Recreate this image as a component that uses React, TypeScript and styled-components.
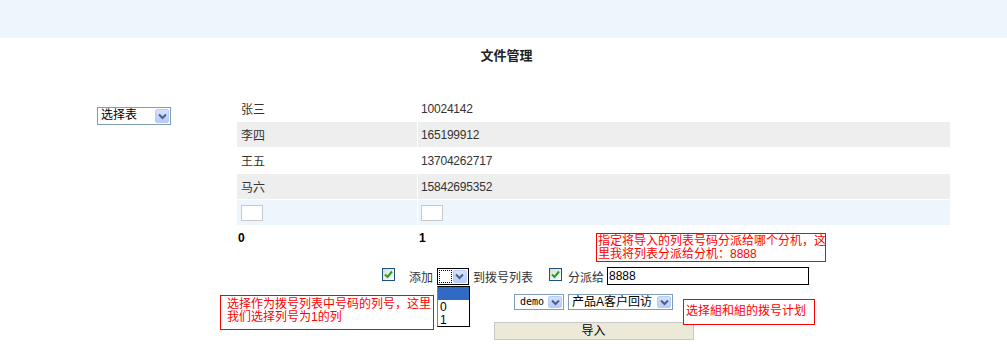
import React, { FC } from 'react'
import styled, { createGlobalStyle } from 'styled-components'

const GlobalStyle = createGlobalStyle`
  body {
    margin: 0;
    background: #fff;
    font-family: "Liberation Sans", "Noto Sans CJK SC", sans-serif;
    font-size: 12px;
    color: #333;
  }
`

type Tone = 'white' | 'gray' | 'blue'

const rows: { name: string; phone: string; tone: Tone }[] = [
  { name: '张三', phone: '10024142', tone: 'white' },
  { name: '李四', phone: '165199912', tone: 'gray' },
  { name: '王五', phone: '13704262717', tone: 'white' },
  { name: '马六', phone: '15842695352', tone: 'gray' },
]

const Chevron: FC = () => (
  <svg width="9" height="7" viewBox="0 0 9 7">
    <path d="M1 1.5 L4.5 5 L8 1.5" fill="none" stroke="#4d6185" strokeWidth="2" />
  </svg>
)

const Check: FC = () => (
  <svg width="11" height="11" viewBox="0 0 11 11">
    <polyline points="2,5.5 4.5,8 9,2.5" fill="none" stroke="#21a121" strokeWidth="2" />
  </svg>
)

const App: FC = () => {
  return (
    <Page>
      <GlobalStyle />
      <TopBand />
      <Title>文件管理</Title>
      <Main>
        <LeftCol>
          <Combo $w={74} $h={18}>
            <ComboText>选择表</ComboText>
            <DropBtn>
              <Chevron />
            </DropBtn>
          </Combo>
        </LeftCol>
        <RightCol>
          <DataTable>
            <tbody>
              {rows.map((r) => (
                <Row key={r.name} $tone={r.tone}>
                  <NameCell>{r.name}</NameCell>
                  <NumCell>{r.phone}</NumCell>
                </Row>
              ))}
              <Row $tone="blue">
                <NameCell>
                  <TinyInput />
                </NameCell>
                <NumCell>
                  <TinyInput />
                </NumCell>
              </Row>
              <IndexRow>
                <IndexCell>0</IndexCell>
                <IndexCell>1</IndexCell>
              </IndexRow>
            </tbody>
          </DataTable>
          <Controls>
            <ControlLine>
              <CheckBox>
                <Check />
              </CheckBox>
              <Label $ml={14}>添加</Label>
              <FocusCombo>
                <FocusBox />
                <DropBtn>
                  <Chevron />
                </DropBtn>
                <DropList>
                  <DropItem $active />
                  <DropItem>0</DropItem>
                  <DropItem>1</DropItem>
                </DropList>
              </FocusCombo>
              <Label $ml={4}>到拨号列表</Label>
              <CheckBox $ml={16}>
                <Check />
              </CheckBox>
              <Label $ml={6}>分派给</Label>
              <ExtInput value="8888" readOnly />
            </ControlLine>
            <SelectLine>
              <Combo $w={50} $h={16}>
                <MonoText>demo</MonoText>
                <DropBtn>
                  <Chevron />
                </DropBtn>
              </Combo>
              <Combo $w={105} $h={16}>
                <ComboText>产品A客户回访</ComboText>
                <DropBtn>
                  <Chevron />
                </DropBtn>
              </Combo>
            </SelectLine>
            <ImportButton>导入</ImportButton>
          </Controls>
        </RightCol>
      </Main>

      <Note $x={596} $y={233} $w={230} $h={29} $pad="1px 0 0 1px">
        指定将导入的列表号码分派给哪个分机，这
        <br />
        里我将列表分派给分机：8888
      </Note>
      <Note $x={220} $y={295} $w={214} $h={35} $pad="2px 0 0 6px">
        选择作为拨号列表中号码的列号，这里
        <br />
        我们选择列号为1的列
      </Note>
      <Note $x={683} $y={299} $w={132} $h={26} $pad="5px 0 0 2px">
        选择組和組的拨号计划
      </Note>
    </Page>
  )
}

export default App

const Page = styled.div`
  position: relative;
  width: 1007px;
  height: 358px;
  overflow: hidden;
`

const TopBand = styled.div`
  height: 38px;
  background: #eef6fd;
`

const Title = styled.h3`
  margin: 0;
  padding-left: 6px;
  height: 36px;
  line-height: 36px;
  text-align: center;
  font-size: 13px;
  font-weight: bold;
  color: #222;
`

const Main = styled.div`
  display: flex;
  padding: 21px 0 0 97px;
`

const LeftCol = styled.div`
  width: 139px;
  padding-top: 12px;
`

const RightCol = styled.div`
  width: 715px;
  display: flex;
  flex-direction: column;
`

const DataTable = styled.table`
  width: 715px;
  border-collapse: separate;
  border-spacing: 1px;
  table-layout: fixed;
`

const toneColor: Record<Tone, string> = {
  white: '#ffffff',
  gray: '#eeeeee',
  blue: '#eef6fd',
}

const Row = styled.tr<{ $tone: Tone }>`
  background: ${(p) => toneColor[p.$tone]};
`

const NameCell = styled.td`
  width: 176px;
  height: 25px;
  padding: 0 0 0 4px;
  color: #333;
  vertical-align: middle;
`

const NumCell = styled.td`
  height: 25px;
  padding: 0 0 0 3px;
  color: #333;
  letter-spacing: -0.2px;
  vertical-align: middle;
`

const TinyInput = styled.span`
  display: block;
  width: 22px;
  height: 16px;
  box-sizing: border-box;
  border: 1px solid #c8c8c8;
  background: #fff;
`

const IndexRow = styled.tr``

const IndexCell = styled.td`
  height: 24px;
  padding: 0 0 0 1px;
  font-weight: bold;
  color: #000;
  vertical-align: middle;
`

const Controls = styled.div`
  display: flex;
  flex-direction: column;
  align-items: center;
  margin-top: 16px;
`

const ControlLine = styled.div`
  display: flex;
  align-items: center;
  height: 18px;
  padding-left: 4px;
`

const SelectLine = styled.div`
  display: flex;
  align-items: center;
  gap: 4px;
  margin-top: 9px;
`

const CheckBox = styled.span<{ $ml?: number }>`
  display: flex;
  align-items: center;
  justify-content: center;
  width: 13px;
  height: 13px;
  box-sizing: border-box;
  margin: 0 0 4px ${(p) => p.$ml ?? 0}px;
  border: 1px solid #1c5180;
  background: linear-gradient(135deg, #dcdcd7 0%, #ffffff 100%);
`

const Label = styled.span<{ $ml?: number }>`
  margin-left: ${(p) => p.$ml ?? 0}px;
  color: #333;
  white-space: nowrap;
`

const Combo = styled.div<{ $w: number; $h: number }>`
  display: flex;
  align-items: stretch;
  width: ${(p) => p.$w}px;
  height: ${(p) => p.$h}px;
  box-sizing: border-box;
  border: 1px solid #7f9db9;
  background: #fff;
`

const ComboText = styled.span`
  flex: 1;
  padding-left: 3px;
  color: #000;
  line-height: 14px;
  white-space: nowrap;
  overflow: hidden;
`

const MonoText = styled.span`
  flex: 1;
  padding-left: 5px;
  font-family: "DejaVu Sans Mono", "Liberation Mono", monospace;
  font-size: 10px;
  line-height: 14px;
  color: #000;
`

const DropBtn = styled.span`
  display: flex;
  align-items: center;
  justify-content: center;
  width: 14px;
  margin: 1px;
  box-sizing: border-box;
  border: 1px solid #b7cbf6;
  border-radius: 2px;
  background: linear-gradient(180deg, #d6e2fd 0%, #b6cbf8 100%);
`

const FocusCombo = styled.div`
  position: relative;
  display: flex;
  align-items: stretch;
  width: 32px;
  height: 17px;
  margin-left: 4px;
  box-sizing: border-box;
  border: 1px solid #000;
  background: #fff;
`

const FocusBox = styled.span`
  width: 13px;
  margin: 1px 0 1px 1px;
  box-sizing: border-box;
  border: 1px dotted #000;
`

const DropList = styled.div`
  position: absolute;
  left: -1px;
  top: 17px;
  width: 33px;
  box-sizing: border-box;
  border: 1px solid #000;
  border-left-color: #808080;
  background: #fff;
  z-index: 2;
`

const DropItem = styled.div<{ $active?: boolean }>`
  height: 13px;
  line-height: 15px;
  padding-left: 2px;
  color: #000;
  background: ${(p) => (p.$active ? '#316ac5' : '#fff')};
`

const ExtInput = styled.input`
  width: 202px;
  height: 18px;
  margin-left: 3px;
  padding: 0 1px;
  box-sizing: border-box;
  border: 1px solid #000;
  font-family: "Liberation Sans", sans-serif;
  font-size: 12px;
  color: #000;
  outline: none;
`

const ImportButton = styled.button`
  width: 200px;
  height: 18px;
  margin-top: 12px;
  padding: 0;
  box-sizing: border-box;
  border: 1px solid #c8c8c8;
  background: #ece9d8;
  font-family: "Liberation Sans", "Noto Sans CJK SC", sans-serif;
  font-size: 12px;
  line-height: 16px;
  color: #000;
`

const Note = styled.div<{ $x: number; $y: number; $w: number; $h: number; $pad: string }>`
  position: absolute;
  left: ${(p) => p.$x}px;
  top: ${(p) => p.$y}px;
  width: ${(p) => p.$w}px;
  height: ${(p) => p.$h}px;
  padding: ${(p) => p.$pad};
  box-sizing: border-box;
  border: 1px solid #ff0000;
  background: #fff;
  color: #ff0000;
  font-size: 12px;
  line-height: 13px;
  white-space: nowrap;
`
